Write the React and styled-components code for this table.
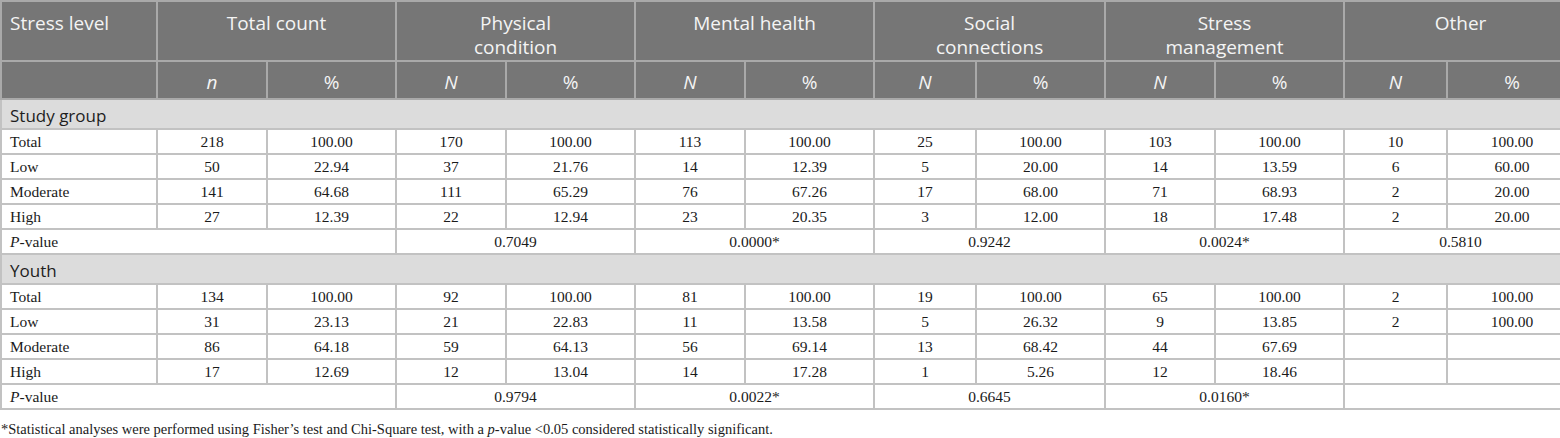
import styled, { createGlobalStyle } from "styled-components";

const GlobalStyle = createGlobalStyle`
  html, body {
    margin: 0;
    padding: 0;
    background: #ffffff;
    overflow: hidden;
  }
`;

const colWidths = [156, 110, 129, 110, 129, 110, 129, 102, 129, 110, 129, 103, 130];

const groups = [
  { title: "Total count", lines: ["Total count"], n: "n" },
  { title: "Physical condition", lines: ["Physical", "condition"], n: "N" },
  { title: "Mental health", lines: ["Mental health"], n: "N" },
  { title: "Social connections", lines: ["Social", "connections"], n: "N" },
  { title: "Stress management", lines: ["Stress", "management"], n: "N" },
  { title: "Other", lines: ["Other"], n: "N" },
];

const sections = [
  {
    name: "Study group",
    rows: [
      ["Total", "218", "100.00", "170", "100.00", "113", "100.00", "25", "100.00", "103", "100.00", "10", "100.00"],
      ["Low", "50", "22.94", "37", "21.76", "14", "12.39", "5", "20.00", "14", "13.59", "6", "60.00"],
      ["Moderate", "141", "64.68", "111", "65.29", "76", "67.26", "17", "68.00", "71", "68.93", "2", "20.00"],
      ["High", "27", "12.39", "22", "12.94", "23", "20.35", "3", "12.00", "18", "17.48", "2", "20.00"],
    ],
    pvalues: ["0.7049", "0.0000*", "0.9242", "0.0024*", "0.5810"],
  },
  {
    name: "Youth",
    rows: [
      ["Total", "134", "100.00", "92", "100.00", "81", "100.00", "19", "100.00", "65", "100.00", "2", "100.00"],
      ["Low", "31", "23.13", "21", "22.83", "11", "13.58", "5", "26.32", "9", "13.85", "2", "100.00"],
      ["Moderate", "86", "64.18", "59", "64.13", "56", "69.14", "13", "68.42", "44", "67.69", "", ""],
      ["High", "17", "12.69", "12", "13.04", "14", "17.28", "1", "5.26", "12", "18.46", "", ""],
    ],
    pvalues: ["0.9794", "0.0022*", "0.6645", "0.0160*", ""],
  },
];

export default function App() {
  return (
    <Page>
      <GlobalStyle />
      <TableWrap>
        <Table>
          <colgroup>
            {colWidths.map((w, i) => (
              <Col key={i} $w={w} />
            ))}
          </colgroup>
          <thead>
            <HeadRow>
              <HeadCell $align="left">Stress level</HeadCell>
              {groups.map((g) => (
                <HeadCell key={g.title} colSpan={2}>
                  {g.lines.map((l, i) => (
                    <span key={l}>
                      {i > 0 && <br />}
                      {l}
                    </span>
                  ))}
                </HeadCell>
              ))}
            </HeadRow>
            <SubHeadRow>
              <SubHeadCell />
              {groups.map((g) => [
                <SubHeadCell key={g.title + "n"}>
                  <em>{g.n}</em>
                </SubHeadCell>,
                <SubHeadCell key={g.title + "p"}>%</SubHeadCell>,
              ])}
            </SubHeadRow>
          </thead>
          <tbody>
            {sections.map((s) => [
              <SectionRow key={s.name}>
                <SectionCell colSpan={13}>{s.name}</SectionCell>
              </SectionRow>,
              ...s.rows.map((r) => (
                <DataRow key={s.name + r[0]}>
                  {r.map((v, i) => (
                    <Cell key={i} $align={i === 0 ? "left" : "center"}>
                      {v}
                    </Cell>
                  ))}
                </DataRow>
              )),
              <DataRow key={s.name + "p"}>
                <Cell colSpan={3} $align="left">
                  <em>P</em>-value
                </Cell>
                {s.pvalues.map((p, i) => (
                  <Cell key={i} colSpan={2}>
                    {p}
                  </Cell>
                ))}
              </DataRow>,
            ])}
          </tbody>
        </Table>
      </TableWrap>
      <Footnote>
        *Statistical analyses were performed using Fisher’s test and Chi-Square test, with a{" "}
        <em>p</em>-value &lt;0.05 considered statistically significant.
      </Footnote>
    </Page>
  );
}

const Page = styled.div`
  width: 1560px;
  height: 438px;
  display: flex;
  flex-direction: column;
  gap: 10px;
`;

const TableWrap = styled.div`
  width: 1560px;
  overflow: hidden;
`;

const Table = styled.table`
  border-collapse: collapse;
  table-layout: fixed;
  width: 1576px;
  border: 2px solid #c2c2c2;
`;

const Col = styled.col`
  width: ${(p) => p.$w}px;
`;

const HeadRow = styled.tr`
  height: 60px;
`;

const HeadCell = styled.th`
  background: #767676;
  color: #f4f4f4;
  font-family: "Open Sans", "DejaVu Sans", sans-serif;
  font-weight: 400;
  font-size: 19px;
  line-height: 24px;
  text-align: ${(p) => p.$align || "center"};
  vertical-align: top;
  padding: 9px 8px 0;
  border: 2px solid #a9a9a9;
`;

const SubHeadRow = styled.tr`
  height: 38px;
`;

const SubHeadCell = styled.th`
  background: #767676;
  color: #f4f4f4;
  font-family: "Open Sans", "DejaVu Sans", sans-serif;
  font-weight: 400;
  font-size: 19px;
  line-height: 24px;
  text-align: center;
  vertical-align: bottom;
  padding: 0 8px 4px;
  border: 2px solid #a9a9a9;

  em {
    font-style: italic;
  }
`;

const SectionRow = styled.tr`
  height: 30px;
`;

const SectionCell = styled.td`
  background: #dcdcdc;
  color: #1e1e1e;
  font-family: "Open Sans", "DejaVu Sans", sans-serif;
  font-size: 17px;
  line-height: 22px;
  padding: 3px 8px 0;
  border: 2px solid #c2c2c2;
`;

const DataRow = styled.tr`
  height: 25px;
`;

const Cell = styled.td`
  color: #1a1a1a;
  font-family: "Liberation Serif", "Times New Roman", serif;
  font-size: 15.5px;
  line-height: 18px;
  text-align: ${(p) => p.$align || "center"};
  padding: 0 8px;
  border: 2px solid #c2c2c2;
  white-space: nowrap;
`;

const Footnote = styled.p`
  margin: 0;
  padding-left: 1px;
  color: #1a1a1a;
  font-family: "Liberation Serif", "Times New Roman", serif;
  font-size: 14.5px;
  line-height: 18px;
`;
